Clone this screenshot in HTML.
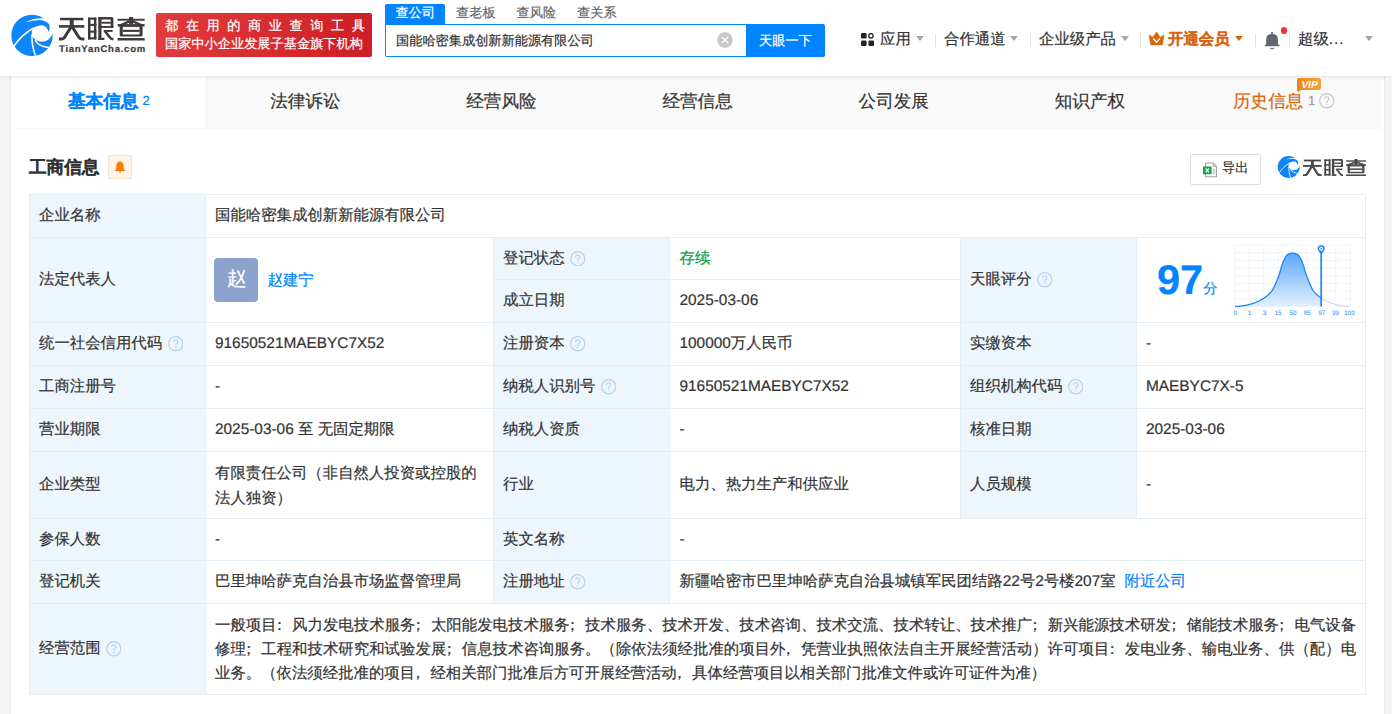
<!DOCTYPE html>
<html><head><meta charset="utf-8"><style>
html,body{margin:0;padding:0;width:1392px;height:714px;overflow:hidden;background:#f5f5f5}
body{font-family:"Liberation Sans",sans-serif;text-rendering:geometricPrecision;position:relative}
.a{position:absolute;box-sizing:border-box}
.t{position:absolute;white-space:nowrap;-webkit-text-stroke:0.2px currentColor}
.p{position:relative;left:-0.32em}
</style></head><body>
<div class="a" style="left:0px;top:0px;width:1392px;height:714px;background:#f5f5f5"></div>
<div class="a" style="left:10px;top:76px;width:1375px;height:638px;background:#ececec"></div>
<div class="a" style="left:11px;top:76px;width:1373px;height:638px;background:#fff"></div>
<div class="a" style="left:0px;top:0px;width:1392px;height:76px;background:#fff;box-shadow:0 1px 4px rgba(0,0,0,.08)"></div>
<svg class="a" style="left:10px;top:13px" width="45" height="45" viewBox="0 0 45 45"><circle cx="22" cy="22.4" r="20.7" fill="#0e85f8"/><path d="M3.6,33.8 Q11,22 23.6,15" fill="none" stroke="#fff" stroke-width="1.5"/>
<path d="M23.3,15.1 C26,13.2 30,12.2 33,12.4 C35.5,12.8 37.6,15 38.4,18.8 C40,16.5 40.2,12.5 38.5,10.6 C37,9 34.7,7.8 30,7.1 Q22,7.3 15.1,9.5 Q23,5 33.2,5.2 L36,3 L50,0 L50,21.1 L42.4,21.1 C41,24.5 38,28.3 32.8,28.6 C29.5,28.8 27,28 25.2,26.5 C23,25 21.6,22.5 21.7,20.8 C21.8,18.5 22.5,16.2 23.3,15.1Z" fill="#fff"/>
<path d="M21.9,22 Q21.6,33 25.8,43.5" fill="none" stroke="#fff" stroke-width="1.5"/>
<path d="M25,27.2 Q29,33.8 39.2,34.6" fill="none" stroke="#fff" stroke-width="1.5"/></svg>
<svg class="a" style="left:59.3px;top:17.2px;color:#3e3a39" width="85.7" height="23.5" viewBox="59.3 17.2 85.7 23.5" preserveAspectRatio="none" fill="currentColor"><rect x="60.4" y="18" width="23.3" height="2.5"/><rect x="59.3" y="25.3" width="25.4" height="2.6"/><rect x="70" y="19" width="4" height="8.5"/>
<path d="M71.3,27.3 L65.2,37 Q63.9,39.25 61.4,39.25 H59.3 M72.7,27.3 L78.8,37 Q80.1,39.25 82.6,39.25 H84.7" fill="none" stroke="currentColor" stroke-width="3"/>
<rect x="88.3" y="17.8" width="2.5" height="21.8"/><rect x="94.2" y="17.8" width="2.5" height="21.8"/><rect x="88.3" y="17.8" width="8.4" height="2.1"/><rect x="88.3" y="37.5" width="8.4" height="2.1"/><rect x="88.3" y="24.1" width="8.4" height="2.1"/><rect x="88.3" y="30.8" width="8.4" height="2.1"/>
<rect x="98.6" y="17.2" width="3.2" height="23"/><rect x="98.6" y="38" width="6.1" height="2.2"/><path d="M98.6,17.2 H112 Q113.7,17.2 113.7,18.9 V28.1 H111 V19.7 H98.6Z"/><rect x="101.8" y="22" width="9.4" height="1.9"/><rect x="98.6" y="26.2" width="15.1" height="1.9"/><rect x="104" y="30.2" width="8.9" height="1.9"/>
<path d="M105.2,31.3 L110.7,38.2 Q111.5,39.2 112.6,39.2 H113.7" fill="none" stroke="currentColor" stroke-width="2.5"/>
<rect x="117.9" y="19" width="27.1" height="1.9"/><rect x="129.4" y="17.2" width="4" height="7.5"/>
<path d="M129.8,21.6 L121.2,25.2 M133,21.6 L141.6,25.2" fill="none" stroke="currentColor" stroke-width="2.4"/>
<rect x="117.9" y="24.3" width="27.1" height="2.3"/><rect x="120" y="26.4" width="22.9" height="0.9"/>
<path d="M120,24.3 H123.1 V34.6 H139.8 V24.3 H142.9 V35.2 Q142.9,36.7 141.4,36.7 H121.5 Q120,36.7 120,35.2Z"/><rect x="123.1" y="30" width="16.7" height="2.1"/>
<rect x="117.9" y="38.2" width="27.1" height="2.5"/></svg>
<div class="t " style="left:59px;top:43.5px;font-size:9.5px;line-height:12px;color:#403a39;font-weight:bold;letter-spacing:0.75px">TianYanCha.com</div>
<div class="a" style="left:156px;top:13px;width:216px;height:44px;background:linear-gradient(100deg,#e23c3f,#cc1e24);border-radius:2px"></div>
<div class="t " style="left:165px;top:17.5px;font-size:13.2px;line-height:16px;color:#fff;font-weight:normal;letter-spacing:7.55px">都在用的商业查询工具</div>
<div class="t " style="left:165px;top:35.5px;font-size:13.2px;line-height:16px;color:#fff;font-weight:normal;letter-spacing:0px">国家中小企业发展子基金旗下机构</div>
<div class="a" style="left:385px;top:4px;width:60px;height:20px;background:#0084ff;border-radius:2px 2px 0 0"></div>
<div class="t " style="left:395.5px;top:5.0px;font-size:13.2px;line-height:16px;color:#fff;font-weight:normal;">查公司</div>
<div class="t " style="left:456px;top:5.0px;font-size:13.2px;line-height:16px;color:#666;font-weight:normal;">查老板</div>
<div class="t " style="left:516.5px;top:5.0px;font-size:13.2px;line-height:16px;color:#666;font-weight:normal;">查风险</div>
<div class="t " style="left:577px;top:5.0px;font-size:13.2px;line-height:16px;color:#666;font-weight:normal;">查关系</div>
<div class="a" style="left:385px;top:24px;width:362px;height:33px;border:1px solid #0084ff;box-sizing:border-box;border-radius:0 0 0 2px;background:#fff"></div>
<div class="t " style="left:396px;top:31.5px;font-size:13.2px;line-height:18px;color:#333;font-weight:normal;">国能哈密集成创新新能源有限公司</div>
<svg class="a" style="left:717px;top:32px" width="16" height="16" viewBox="0 0 16 16"><circle cx="8" cy="8" r="7.8" fill="#c8c8c8"/><path d="M5.2,5.2 L10.8,10.8 M10.8,5.2 L5.2,10.8" stroke="#fff" stroke-width="1.3"/></svg>
<div class="a" style="left:746px;top:24px;width:79px;height:33px;background:#0084ff;border-radius:0 2px 2px 0"></div>
<div class="t " style="left:759px;top:31.5px;font-size:13.2px;line-height:18px;color:#fff;font-weight:normal;">天眼一下</div>
<svg class="a" style="left:861px;top:33px" width="13" height="13" viewBox="0 0 13 13">
<rect x="0" y="0" width="5.6" height="5.6" rx="1.3" fill="#222"/><circle cx="9.9" cy="2.8" r="2.2" fill="none" stroke="#222" stroke-width="1.3"/>
<rect x="0" y="7.4" width="5.6" height="5.6" rx="1.3" fill="#222"/><rect x="7.4" y="7.4" width="5.6" height="5.6" rx="1.3" fill="#222"/></svg>
<div class="t " style="left:880px;top:29.5px;font-size:15.4px;line-height:20px;color:#333;font-weight:normal;">应用</div>
<svg class="a" style="left:916px;top:36px" width="8" height="5" viewBox="0 0 8 5"><path d="M0,0 L8,0 L4,5Z" fill="#a6a6a6"/></svg>
<div class="a" style="left:935px;top:34px;width:1px;height:12.5px;background:#dde1e6"></div>
<div class="t " style="left:944px;top:29.5px;font-size:15.4px;line-height:20px;color:#333;font-weight:normal;">合作通道</div>
<svg class="a" style="left:1010px;top:36px" width="8" height="5" viewBox="0 0 8 5"><path d="M0,0 L8,0 L4,5Z" fill="#a6a6a6"/></svg>
<div class="a" style="left:1030px;top:34px;width:1px;height:12.5px;background:#dde1e6"></div>
<div class="t " style="left:1039px;top:29.5px;font-size:15.4px;line-height:20px;color:#333;font-weight:normal;">企业级产品</div>
<svg class="a" style="left:1120.5px;top:36px" width="8" height="5" viewBox="0 0 8 5"><path d="M0,0 L8,0 L4,5Z" fill="#a6a6a6"/></svg>
<div class="a" style="left:1140px;top:34px;width:1px;height:12.5px;background:#dde1e6"></div>
<svg class="a" style="left:1145px;top:28px" width="24" height="22" viewBox="0 0 24 22"><path d="M4,7 L7.8,9.2 L11.5,4 L15.2,9.2 L19,7 L17.3,16.9 L5.7,16.9Z" fill="#d9660f" stroke="#d9660f" stroke-width=".6" stroke-linejoin="round"/><path d="M8.3,10.6 L11.6,14.2 L14.9,10.6" stroke="#fff" stroke-width="1.5" fill="none"/></svg>
<div class="t " style="left:1168px;top:29.5px;font-size:15.4px;line-height:20px;color:#d9660f;font-weight:bold;">开通会员</div>
<svg class="a" style="left:1235px;top:36px" width="8" height="5" viewBox="0 0 8 5"><path d="M0,0 L8,0 L4,5Z" fill="#d9660f"/></svg>
<div class="a" style="left:1254.5px;top:34px;width:1px;height:12.5px;background:#dde1e6"></div>
<svg class="a" style="left:1264px;top:31px" width="17" height="19" viewBox="0 0 17 19"><rect x="7.2" y="1" width="1.7" height="3" fill="#5f6670"/><path d="M2.2,14 V8.4 Q2.2,3.1 8.05,3.1 Q13.9,3.1 13.9,8.4 V14Z" fill="#5f6670"/><rect x="0.9" y="13.6" width="14.7" height="1.6" rx=".8" fill="#5f6670"/><rect x="6.2" y="16.9" width="4" height="1" fill="#5f6670"/></svg>
<div class="a" style="left:1280.8px;top:27.1px;width:6.4px;height:6.6px;background:#fb2f2f;border-radius:50%"></div>
<div class="a" style="left:1289px;top:34px;width:1px;height:12.5px;background:#dde1e6"></div>
<div class="t " style="left:1298px;top:29.5px;font-size:15.4px;line-height:20px;color:#333;font-weight:normal;">超级<span style="letter-spacing:0.9px">...</span></div>
<svg class="a" style="left:1365px;top:36px" width="8" height="5" viewBox="0 0 8 5"><path d="M0,0 L8,0 L4,5Z" fill="#a6a6a6"/></svg>
<div class="a" style="left:11px;top:76px;width:1371px;height:53px;background:#f9f9f9"></div>
<div class="a" style="left:11px;top:76px;width:195px;height:52px;background:#fff"></div>
<div class="a" style="left:206px;top:76px;width:1px;height:53px;background:#f0f0f0"></div>
<div class="a" style="left:10px;top:76px;width:1375px;height:5px;background:linear-gradient(rgba(0,0,0,.075),rgba(0,0,0,.02) 50%,rgba(0,0,0,0))"></div>
<div class="a" style="left:11px;top:128px;width:195px;height:1px;background:#f9f9f9"></div>
<div class="t " style="left:68px;top:89.0px;font-size:17.6px;line-height:24px;color:#0084ff;font-weight:bold;">基本信息</div>
<div class="t " style="left:142.5px;top:89.0px;font-size:13.2px;line-height:24px;color:#0084ff;font-weight:normal;">2</div>
<div class="t " style="left:270.14px;top:89.0px;font-size:17.6px;line-height:24px;color:#333;font-weight:normal;">法律诉讼</div>
<div class="t " style="left:466.28px;top:89.0px;font-size:17.6px;line-height:24px;color:#333;font-weight:normal;">经营风险</div>
<div class="t " style="left:662.42px;top:89.0px;font-size:17.6px;line-height:24px;color:#333;font-weight:normal;">经营信息</div>
<div class="t " style="left:858.56px;top:89.0px;font-size:17.6px;line-height:24px;color:#333;font-weight:normal;">公司发展</div>
<div class="t " style="left:1054.6999999999998px;top:89.0px;font-size:17.6px;line-height:24px;color:#333;font-weight:normal;">知识产权</div>
<div class="t " style="left:1233px;top:89.0px;font-size:17.6px;line-height:24px;color:#d9660f;font-weight:normal;">历史信息</div>
<div class="t " style="left:1308px;top:89.0px;font-size:13.2px;line-height:24px;color:#999;font-weight:normal;">1</div>
<svg class="a" style="left:1319px;top:93px" width="15.5" height="15.5" viewBox="0 0 16 16"><circle cx="8" cy="8" r="7.3" fill="none" stroke="#c3c9d0" stroke-width="1.2"/><path d="M5.9,6.2 Q5.9,3.9 8,3.9 Q10.1,3.9 10.1,5.9 Q10.1,7.2 8.8,7.9 Q8,8.4 8,9.6 L8,10.2" fill="none" stroke="#c3c9d0" stroke-width="1.15"/><circle cx="8" cy="12" r=".75" fill="#c3c9d0"/></svg>
<svg class="a" style="left:1297px;top:78px" width="24" height="15" viewBox="0 0 24 15"><defs><linearGradient id="vg" x1="0" x2="1"><stop offset="0" stop-color="#f08519"/><stop offset="1" stop-color="#f6a33a"/></linearGradient></defs><path d="M2,0 L22,0 Q24,0 24,2 L24,10 Q24,12 22,12 L4,12 L1,14.5 L0,12 L0,2 Q0,0 2,0Z" fill="url(#vg)"/><text x="12.5" y="9.6" font-family="Liberation Sans" font-size="10" font-weight="bold" font-style="italic" fill="#fff" text-anchor="middle">VIP</text></svg>
<div class="t " style="left:29px;top:154.5px;font-size:17.6px;line-height:24px;color:#333;font-weight:bold;">工商信息</div>
<div class="a" style="left:108px;top:155px;width:24px;height:24px;background:#fff4e9;border:1px solid #ffe3c8;box-sizing:border-box;border-radius:2px"></div>
<svg class="a" style="left:114px;top:161px" width="12" height="12" viewBox="0 0 12 12"><path d="M6,0.5 Q9.6,0.8 9.7,5 L9.9,8.6 L11.4,10 L0.6,10 L2.1,8.6 L2.3,5 Q2.4,0.8 6,0.5Z" fill="#ff7a00"/><path d="M4.3,10.6 Q6,12.6 7.7,10.6Z" fill="#ff7a00"/></svg>
<div class="a" style="left:1190px;top:154px;width:71px;height:31px;border:1px solid #dcdcdc;box-sizing:border-box;border-radius:2px;background:#fff"></div>
<svg class="a" style="left:1203px;top:161.5px" width="16" height="16" viewBox="0 0 16 16"><path d="M2.6,1 H10.2 L13.4,4.4 V14.7 H2.6Z" fill="#fff" stroke="#9ea3a8" stroke-width="1.1"/><path d="M10.2,1.2 V4.4 H13.2" fill="none" stroke="#9ea3a8" stroke-width="0.9"/><rect x="0" y="4.4" width="8.6" height="7.9" rx=".3" fill="#18a14a"/><path d="M2.7,6.4 L5.9,10.4 M5.9,6.4 L2.7,10.4" stroke="#fff" stroke-width="1.25"/><rect x="9.6" y="6.6" width="2.3" height="4.4" fill="#cdd0d4"/><rect x="9.6" y="11.3" width="2.3" height="0.9" fill="#b0b4b9"/></svg>
<div class="t " style="left:1222px;top:158.5px;font-size:13.2px;line-height:18px;color:#333;font-weight:normal;">导出</div>
<svg class="a" style="left:1277.3px;top:155px" width="24" height="24" viewBox="0 0 45 45"><circle cx="22" cy="22.4" r="20.7" fill="#0e85f8"/><path d="M3.6,33.8 Q11,22 23.6,15" fill="none" stroke="#fff" stroke-width="1.5"/>
<path d="M23.3,15.1 C26,13.2 30,12.2 33,12.4 C35.5,12.8 37.6,15 38.4,18.8 C40,16.5 40.2,12.5 38.5,10.6 C37,9 34.7,7.8 30,7.1 Q22,7.3 15.1,9.5 Q23,5 33.2,5.2 L36,3 L50,0 L50,21.1 L42.4,21.1 C41,24.5 38,28.3 32.8,28.6 C29.5,28.8 27,28 25.2,26.5 C23,25 21.6,22.5 21.7,20.8 C21.8,18.5 22.5,16.2 23.3,15.1Z" fill="#fff"/>
<path d="M21.9,22 Q21.6,33 25.8,43.5" fill="none" stroke="#fff" stroke-width="1.5"/>
<path d="M25,27.2 Q29,33.8 39.2,34.6" fill="none" stroke="#fff" stroke-width="1.5"/></svg>
<svg class="a" style="left:1303px;top:158.6px;color:#4a4848" width="63" height="17.3" viewBox="59.3 17.2 85.7 23.5" preserveAspectRatio="none" fill="currentColor"><rect x="60.4" y="18" width="23.3" height="2.5"/><rect x="59.3" y="25.3" width="25.4" height="2.6"/><rect x="70" y="19" width="4" height="8.5"/>
<path d="M71.3,27.3 L65.2,37 Q63.9,39.25 61.4,39.25 H59.3 M72.7,27.3 L78.8,37 Q80.1,39.25 82.6,39.25 H84.7" fill="none" stroke="currentColor" stroke-width="3"/>
<rect x="88.3" y="17.8" width="2.5" height="21.8"/><rect x="94.2" y="17.8" width="2.5" height="21.8"/><rect x="88.3" y="17.8" width="8.4" height="2.1"/><rect x="88.3" y="37.5" width="8.4" height="2.1"/><rect x="88.3" y="24.1" width="8.4" height="2.1"/><rect x="88.3" y="30.8" width="8.4" height="2.1"/>
<rect x="98.6" y="17.2" width="3.2" height="23"/><rect x="98.6" y="38" width="6.1" height="2.2"/><path d="M98.6,17.2 H112 Q113.7,17.2 113.7,18.9 V28.1 H111 V19.7 H98.6Z"/><rect x="101.8" y="22" width="9.4" height="1.9"/><rect x="98.6" y="26.2" width="15.1" height="1.9"/><rect x="104" y="30.2" width="8.9" height="1.9"/>
<path d="M105.2,31.3 L110.7,38.2 Q111.5,39.2 112.6,39.2 H113.7" fill="none" stroke="currentColor" stroke-width="2.5"/>
<rect x="117.9" y="19" width="27.1" height="1.9"/><rect x="129.4" y="17.2" width="4" height="7.5"/>
<path d="M129.8,21.6 L121.2,25.2 M133,21.6 L141.6,25.2" fill="none" stroke="currentColor" stroke-width="2.4"/>
<rect x="117.9" y="24.3" width="27.1" height="2.3"/><rect x="120" y="26.4" width="22.9" height="0.9"/>
<path d="M120,24.3 H123.1 V34.6 H139.8 V24.3 H142.9 V35.2 Q142.9,36.7 141.4,36.7 H121.5 Q120,36.7 120,35.2Z"/><rect x="123.1" y="30" width="16.7" height="2.1"/>
<rect x="117.9" y="38.2" width="27.1" height="2.5"/></svg>
<div class="a" style="left:29px;top:194px;width:1336px;height:500px;background:#fff"></div>
<div class="a" style="left:29px;top:194px;width:176px;height:43px;background:#eef6fd"></div>
<div class="a" style="left:29px;top:237px;width:176px;height:85px;background:#eef6fd"></div>
<div class="a" style="left:29px;top:322px;width:176px;height:43px;background:#eef6fd"></div>
<div class="a" style="left:29px;top:365px;width:176px;height:43px;background:#eef6fd"></div>
<div class="a" style="left:29px;top:408px;width:176px;height:43px;background:#eef6fd"></div>
<div class="a" style="left:29px;top:451px;width:176px;height:67px;background:#eef6fd"></div>
<div class="a" style="left:29px;top:518px;width:176px;height:42px;background:#eef6fd"></div>
<div class="a" style="left:29px;top:560px;width:176px;height:43px;background:#eef6fd"></div>
<div class="a" style="left:29px;top:603px;width:176px;height:91px;background:#eef6fd"></div>
<div class="a" style="left:493px;top:237px;width:176px;height:85px;background:#eef6fd"></div>
<div class="a" style="left:493px;top:322px;width:176px;height:43px;background:#eef6fd"></div>
<div class="a" style="left:493px;top:365px;width:176px;height:43px;background:#eef6fd"></div>
<div class="a" style="left:493px;top:408px;width:176px;height:43px;background:#eef6fd"></div>
<div class="a" style="left:493px;top:451px;width:176px;height:67px;background:#eef6fd"></div>
<div class="a" style="left:493px;top:518px;width:176px;height:42px;background:#eef6fd"></div>
<div class="a" style="left:493px;top:560px;width:176px;height:43px;background:#eef6fd"></div>
<div class="a" style="left:960px;top:237px;width:176px;height:85px;background:#eef6fd"></div>
<div class="a" style="left:960px;top:322px;width:176px;height:43px;background:#eef6fd"></div>
<div class="a" style="left:960px;top:365px;width:176px;height:43px;background:#eef6fd"></div>
<div class="a" style="left:960px;top:408px;width:176px;height:43px;background:#eef6fd"></div>
<div class="a" style="left:960px;top:451px;width:176px;height:67px;background:#eef6fd"></div>
<div class="a" style="left:29px;top:194px;width:1337px;height:1px;background:#e3edf6"></div>
<div class="a" style="left:29px;top:237px;width:1337px;height:1px;background:#e3edf6"></div>
<div class="a" style="left:29px;top:322px;width:1337px;height:1px;background:#e3edf6"></div>
<div class="a" style="left:29px;top:365px;width:1337px;height:1px;background:#e3edf6"></div>
<div class="a" style="left:29px;top:408px;width:1337px;height:1px;background:#e3edf6"></div>
<div class="a" style="left:29px;top:451px;width:1337px;height:1px;background:#e3edf6"></div>
<div class="a" style="left:29px;top:518px;width:1337px;height:1px;background:#e3edf6"></div>
<div class="a" style="left:29px;top:560px;width:1337px;height:1px;background:#e3edf6"></div>
<div class="a" style="left:29px;top:603px;width:1337px;height:1px;background:#e3edf6"></div>
<div class="a" style="left:29px;top:694px;width:1337px;height:1px;background:#e3edf6"></div>
<div class="a" style="left:493px;top:279px;width:468px;height:1px;background:#e3edf6"></div>
<div class="a" style="left:29px;top:194px;width:1px;height:501px;background:#e3edf6"></div>
<div class="a" style="left:1365px;top:194px;width:1px;height:501px;background:#e3edf6"></div>
<div class="a" style="left:205px;top:194px;width:1px;height:501px;background:#e3edf6"></div>
<div class="a" style="left:493px;top:237px;width:1px;height:367px;background:#e3edf6"></div>
<div class="a" style="left:669px;top:237px;width:1px;height:367px;background:#e3edf6"></div>
<div class="a" style="left:960px;top:237px;width:1px;height:282px;background:#e3edf6"></div>
<div class="a" style="left:1136px;top:237px;width:1px;height:282px;background:#e3edf6"></div>
<div class="t " style="left:39px;top:204.2px;font-size:15.4px;line-height:24px;color:#333;font-weight:normal;">企业名称</div>
<div class="t " style="left:215px;top:204.2px;font-size:15.4px;line-height:24px;color:#333;font-weight:normal;">国能哈密集成创新新能源有限公司</div>
<div class="t " style="left:39px;top:268.2px;font-size:15.4px;line-height:24px;color:#333;font-weight:normal;">法定代表人</div>
<div class="a" style="left:214px;top:258px;width:44px;height:44px;background:#8ba3cc;border-radius:4px"></div>
<div class="t " style="left:227px;top:266.09999999999997px;font-size:19.5px;line-height:26px;color:#fff;font-weight:normal;">赵</div>
<div class="t " style="left:267.5px;top:268.7px;font-size:15.4px;line-height:24px;color:#0084ff;font-weight:normal;">赵建宁</div>
<div class="t " style="left:503px;top:246.7px;font-size:15.4px;line-height:24px;color:#333;font-weight:normal;">登记状态</div>
<svg class="a" style="left:570.0px;top:250.6px" width="15.5" height="15.5" viewBox="0 0 16 16"><circle cx="8" cy="8" r="7.3" fill="none" stroke="#b6d2ee" stroke-width="1.2"/><path d="M5.9,6.2 Q5.9,3.9 8,3.9 Q10.1,3.9 10.1,5.9 Q10.1,7.2 8.8,7.9 Q8,8.4 8,9.6 L8,10.2" fill="none" stroke="#b6d2ee" stroke-width="1.15"/><circle cx="8" cy="12" r=".75" fill="#b6d2ee"/></svg>
<div class="t " style="left:679.5px;top:246.7px;font-size:15.4px;line-height:24px;color:#0b9b45;font-weight:normal;">存续</div>
<div class="t " style="left:503px;top:289.45px;font-size:15.4px;line-height:24px;color:#333;font-weight:normal;">成立日期</div>
<div class="t " style="left:679.5px;top:289.45px;font-size:15.4px;line-height:24px;color:#333;font-weight:normal;">2025-03-06</div>
<div class="t " style="left:970px;top:268.2px;font-size:15.4px;line-height:24px;color:#333;font-weight:normal;">天眼评分</div>
<svg class="a" style="left:1036.5px;top:272.1px" width="15.5" height="15.5" viewBox="0 0 16 16"><circle cx="8" cy="8" r="7.3" fill="none" stroke="#b6d2ee" stroke-width="1.2"/><path d="M5.9,6.2 Q5.9,3.9 8,3.9 Q10.1,3.9 10.1,5.9 Q10.1,7.2 8.8,7.9 Q8,8.4 8,9.6 L8,10.2" fill="none" stroke="#b6d2ee" stroke-width="1.15"/><circle cx="8" cy="12" r=".75" fill="#b6d2ee"/></svg>
<div class="t " style="left:1157px;top:258.0px;font-size:41.5px;line-height:44px;color:#0084ff;font-weight:bold;">97</div>
<div class="t " style="left:1203.5px;top:277.5px;font-size:14px;line-height:20px;color:#0084ff;font-weight:normal;">分</div>
<svg class="a" style="left:1235.2px;top:245.2px;overflow:visible" width="115.29999999999995" height="61.5" viewBox="0 0 115.29999999999995 61.5">
<defs><linearGradient id="cg" x1="0" y1="0" x2="0" y2="1"><stop offset="0" stop-color="#5aa8fd"/><stop offset="1" stop-color="#e4effc"/></linearGradient></defs>
<line x1="0.00" y1="0" x2="0.00" y2="61.5" stroke="#eef4fb" stroke-width="1"/><line x1="14.41" y1="0" x2="14.41" y2="61.5" stroke="#eef4fb" stroke-width="1"/><line x1="28.82" y1="0" x2="28.82" y2="61.5" stroke="#eef4fb" stroke-width="1"/><line x1="43.24" y1="0" x2="43.24" y2="61.5" stroke="#eef4fb" stroke-width="1"/><line x1="57.65" y1="0" x2="57.65" y2="61.5" stroke="#eef4fb" stroke-width="1"/><line x1="72.06" y1="0" x2="72.06" y2="61.5" stroke="#eef4fb" stroke-width="1"/><line x1="86.47" y1="0" x2="86.47" y2="61.5" stroke="#eef4fb" stroke-width="1"/><line x1="100.89" y1="0" x2="100.89" y2="61.5" stroke="#eef4fb" stroke-width="1"/><line x1="115.30" y1="0" x2="115.30" y2="61.5" stroke="#eef4fb" stroke-width="1"/><line x1="0" y1="0.00" x2="115.29999999999995" y2="0.00" stroke="#eef4fb" stroke-width="1"/><line x1="0" y1="7.69" x2="115.29999999999995" y2="7.69" stroke="#eef4fb" stroke-width="1"/><line x1="0" y1="15.38" x2="115.29999999999995" y2="15.38" stroke="#eef4fb" stroke-width="1"/><line x1="0" y1="23.06" x2="115.29999999999995" y2="23.06" stroke="#eef4fb" stroke-width="1"/><line x1="0" y1="30.75" x2="115.29999999999995" y2="30.75" stroke="#eef4fb" stroke-width="1"/><line x1="0" y1="38.44" x2="115.29999999999995" y2="38.44" stroke="#eef4fb" stroke-width="1"/><line x1="0" y1="46.12" x2="115.29999999999995" y2="46.12" stroke="#eef4fb" stroke-width="1"/><line x1="0" y1="53.81" x2="115.29999999999995" y2="53.81" stroke="#eef4fb" stroke-width="1"/><line x1="0" y1="61.50" x2="115.29999999999995" y2="61.50" stroke="#eef4fb" stroke-width="1"/>
<path d="M0.00,61.50 L0.25,61.49 L0.50,61.48 L0.75,61.47 L1.00,61.46 L1.25,61.45 L1.50,61.43 L1.75,61.42 L2.01,61.40 L2.26,61.38 L2.51,61.37 L2.76,61.35 L3.01,61.33 L3.26,61.30 L3.51,61.28 L3.76,61.26 L4.01,61.23 L4.26,61.21 L4.51,61.18 L4.76,61.16 L5.01,61.13 L5.26,61.10 L5.51,61.08 L5.76,61.05 L6.02,61.02 L6.27,60.99 L6.52,60.96 L6.77,60.93 L7.02,60.90 L7.27,60.86 L7.52,60.83 L7.77,60.80 L8.02,60.77 L8.27,60.74 L8.52,60.70 L8.77,60.66 L9.02,60.63 L9.27,60.59 L9.52,60.54 L9.78,60.50 L10.03,60.46 L10.28,60.41 L10.53,60.36 L10.78,60.31 L11.03,60.26 L11.28,60.21 L11.53,60.16 L11.78,60.10 L12.03,60.04 L12.28,59.99 L12.53,59.93 L12.78,59.87 L13.03,59.81 L13.28,59.75 L13.54,59.69 L13.79,59.63 L14.04,59.56 L14.29,59.50 L14.54,59.43 L14.79,59.37 L15.04,59.30 L15.29,59.24 L15.54,59.17 L15.79,59.10 L16.04,59.03 L16.29,58.95 L16.54,58.88 L16.79,58.80 L17.04,58.72 L17.29,58.64 L17.55,58.56 L17.80,58.47 L18.05,58.39 L18.30,58.30 L18.55,58.21 L18.80,58.12 L19.05,58.03 L19.30,57.93 L19.55,57.84 L19.80,57.74 L20.05,57.65 L20.30,57.55 L20.55,57.45 L20.80,57.35 L21.05,57.24 L21.31,57.14 L21.56,57.04 L21.81,56.93 L22.06,56.82 L22.31,56.71 L22.56,56.60 L22.81,56.49 L23.06,56.38 L23.31,56.26 L23.56,56.14 L23.81,56.02 L24.06,55.90 L24.31,55.78 L24.56,55.65 L24.81,55.52 L25.07,55.39 L25.32,55.26 L25.57,55.12 L25.82,54.99 L26.07,54.85 L26.32,54.71 L26.57,54.56 L26.82,54.42 L27.07,54.27 L27.32,54.12 L27.57,53.97 L27.82,53.81 L28.07,53.66 L28.32,53.49 L28.57,53.33 L28.82,53.17 L29.08,53.00 L29.33,52.83 L29.58,52.66 L29.83,52.49 L30.08,52.31 L30.33,52.13 L30.58,51.96 L30.83,51.77 L31.08,51.59 L31.33,51.40 L31.58,51.21 L31.83,51.01 L32.08,50.81 L32.33,50.61 L32.58,50.40 L32.84,50.19 L33.09,49.97 L33.34,49.74 L33.59,49.51 L33.84,49.28 L34.09,49.04 L34.34,48.79 L34.59,48.53 L34.84,48.27 L35.09,48.00 L35.34,47.73 L35.59,47.44 L35.84,47.15 L36.09,46.85 L36.34,46.55 L36.60,46.23 L36.85,45.88 L37.10,45.52 L37.35,45.14 L37.60,44.73 L37.85,44.31 L38.10,43.86 L38.35,43.40 L38.60,42.93 L38.85,42.43 L39.10,41.92 L39.35,41.40 L39.60,40.87 L39.85,40.32 L40.10,39.76 L40.35,39.19 L40.61,38.61 L40.86,38.02 L41.11,37.42 L41.36,36.82 L41.61,36.21 L41.86,35.59 L42.11,34.97 L42.36,34.35 L42.61,33.72 L42.86,33.09 L43.11,32.46 L43.36,31.83 L43.61,31.18 L43.86,30.47 L44.11,29.73 L44.37,28.95 L44.62,28.14 L44.87,27.31 L45.12,26.46 L45.37,25.60 L45.62,24.73 L45.87,23.86 L46.12,22.99 L46.37,22.13 L46.62,21.29 L46.87,20.46 L47.12,19.67 L47.37,18.90 L47.62,18.17 L47.87,17.49 L48.13,16.85 L48.38,16.27 L48.63,15.74 L48.88,15.26 L49.13,14.77 L49.38,14.29 L49.63,13.82 L49.88,13.35 L50.13,12.90 L50.38,12.46 L50.63,12.03 L50.88,11.63 L51.13,11.24 L51.38,10.88 L51.63,10.55 L51.88,10.24 L52.14,9.97 L52.39,9.73 L52.64,9.52 L52.89,9.36 L53.14,9.23 L53.39,9.13 L53.64,9.04 L53.89,8.94 L54.14,8.86 L54.39,8.77 L54.64,8.69 L54.89,8.61 L55.14,8.54 L55.39,8.48 L55.64,8.42 L55.90,8.37 L56.15,8.32 L56.40,8.28 L56.65,8.24 L56.90,8.22 L57.15,8.20 L57.40,8.18 L57.65,8.18 L57.90,8.18 L58.15,8.20 L58.40,8.22 L58.65,8.24 L58.90,8.28 L59.15,8.32 L59.40,8.37 L59.66,8.42 L59.91,8.48 L60.16,8.54 L60.41,8.61 L60.66,8.69 L60.91,8.77 L61.16,8.86 L61.41,8.94 L61.66,9.04 L61.91,9.13 L62.16,9.23 L62.41,9.36 L62.66,9.52 L62.91,9.73 L63.16,9.97 L63.41,10.24 L63.67,10.55 L63.92,10.88 L64.17,11.24 L64.42,11.63 L64.67,12.03 L64.92,12.46 L65.17,12.90 L65.42,13.35 L65.67,13.82 L65.92,14.29 L66.17,14.77 L66.42,15.26 L66.67,15.74 L66.92,16.27 L67.17,16.85 L67.43,17.49 L67.68,18.17 L67.93,18.90 L68.18,19.67 L68.43,20.46 L68.68,21.29 L68.93,22.13 L69.18,22.99 L69.43,23.86 L69.68,24.73 L69.93,25.60 L70.18,26.46 L70.43,27.31 L70.68,28.14 L70.93,28.95 L71.19,29.73 L71.44,30.47 L71.69,31.18 L71.94,31.83 L72.19,32.46 L72.44,33.09 L72.69,33.72 L72.94,34.35 L73.19,34.97 L73.44,35.59 L73.69,36.21 L73.94,36.82 L74.19,37.42 L74.44,38.02 L74.69,38.61 L74.94,39.19 L75.20,39.76 L75.45,40.32 L75.70,40.87 L75.95,41.40 L76.20,41.92 L76.45,42.43 L76.70,42.93 L76.95,43.40 L77.20,43.86 L77.45,44.31 L77.70,44.73 L77.95,45.14 L78.20,45.52 L78.45,45.88 L78.70,46.23 L78.96,46.55 L79.21,46.85 L79.46,47.15 L79.71,47.44 L79.96,47.73 L80.21,48.00 L80.46,48.27 L80.71,48.53 L80.96,48.79 L81.21,49.04 L81.46,49.28 L81.71,49.51 L81.96,49.74 L82.21,49.97 L82.46,50.19 L82.72,50.40 L82.97,50.61 L83.22,50.81 L83.47,51.01 L83.72,51.21 L83.97,51.40 L84.22,51.59 L84.47,51.77 L84.72,51.96 L84.97,52.13 L85.22,52.31 L85.47,52.49 L85.72,52.66 L85.97,52.83 L86.20,52.98 L86.20,61.5 L0,61.5Z" fill="url(#cg)"/>
<path d="M86.20,52.98 L86.22,53.00 L86.47,53.17 L86.73,53.33 L86.98,53.49 L87.23,53.66 L87.48,53.81 L87.73,53.97 L87.98,54.12 L88.23,54.27 L88.48,54.42 L88.73,54.56 L88.98,54.71 L89.23,54.85 L89.48,54.99 L89.73,55.12 L89.98,55.26 L90.23,55.39 L90.49,55.52 L90.74,55.65 L90.99,55.78 L91.24,55.90 L91.49,56.02 L91.74,56.14 L91.99,56.26 L92.24,56.38 L92.49,56.49 L92.74,56.60 L92.99,56.71 L93.24,56.82 L93.49,56.93 L93.74,57.04 L93.99,57.14 L94.25,57.24 L94.50,57.35 L94.75,57.45 L95.00,57.55 L95.25,57.65 L95.50,57.74 L95.75,57.84 L96.00,57.93 L96.25,58.03 L96.50,58.12 L96.75,58.21 L97.00,58.30 L97.25,58.39 L97.50,58.47 L97.75,58.56 L98.00,58.64 L98.26,58.72 L98.51,58.80 L98.76,58.88 L99.01,58.95 L99.26,59.03 L99.51,59.10 L99.76,59.17 L100.01,59.24 L100.26,59.30 L100.51,59.37 L100.76,59.43 L101.01,59.50 L101.26,59.56 L101.51,59.63 L101.76,59.69 L102.02,59.75 L102.27,59.81 L102.52,59.87 L102.77,59.93 L103.02,59.99 L103.27,60.04 L103.52,60.10 L103.77,60.16 L104.02,60.21 L104.27,60.26 L104.52,60.31 L104.77,60.36 L105.02,60.41 L105.27,60.46 L105.52,60.50 L105.78,60.54 L106.03,60.59 L106.28,60.63 L106.53,60.66 L106.78,60.70 L107.03,60.74 L107.28,60.77 L107.53,60.80 L107.78,60.83 L108.03,60.86 L108.28,60.90 L108.53,60.93 L108.78,60.96 L109.03,60.99 L109.28,61.02 L109.53,61.05 L109.79,61.08 L110.04,61.10 L110.29,61.13 L110.54,61.16 L110.79,61.18 L111.04,61.21 L111.29,61.23 L111.54,61.26 L111.79,61.28 L112.04,61.30 L112.29,61.33 L112.54,61.35 L112.79,61.37 L113.04,61.38 L113.29,61.40 L113.55,61.42 L113.80,61.43 L114.05,61.45 L114.30,61.46 L114.55,61.47 L114.80,61.48 L115.05,61.49 L115.30,61.50" fill="none" stroke="#cdd3da" stroke-width="1.1"/>
<path d="M0.00,61.50 L0.25,61.49 L0.50,61.48 L0.75,61.47 L1.00,61.46 L1.25,61.45 L1.50,61.43 L1.75,61.42 L2.01,61.40 L2.26,61.38 L2.51,61.37 L2.76,61.35 L3.01,61.33 L3.26,61.30 L3.51,61.28 L3.76,61.26 L4.01,61.23 L4.26,61.21 L4.51,61.18 L4.76,61.16 L5.01,61.13 L5.26,61.10 L5.51,61.08 L5.76,61.05 L6.02,61.02 L6.27,60.99 L6.52,60.96 L6.77,60.93 L7.02,60.90 L7.27,60.86 L7.52,60.83 L7.77,60.80 L8.02,60.77 L8.27,60.74 L8.52,60.70 L8.77,60.66 L9.02,60.63 L9.27,60.59 L9.52,60.54 L9.78,60.50 L10.03,60.46 L10.28,60.41 L10.53,60.36 L10.78,60.31 L11.03,60.26 L11.28,60.21 L11.53,60.16 L11.78,60.10 L12.03,60.04 L12.28,59.99 L12.53,59.93 L12.78,59.87 L13.03,59.81 L13.28,59.75 L13.54,59.69 L13.79,59.63 L14.04,59.56 L14.29,59.50 L14.54,59.43 L14.79,59.37 L15.04,59.30 L15.29,59.24 L15.54,59.17 L15.79,59.10 L16.04,59.03 L16.29,58.95 L16.54,58.88 L16.79,58.80 L17.04,58.72 L17.29,58.64 L17.55,58.56 L17.80,58.47 L18.05,58.39 L18.30,58.30 L18.55,58.21 L18.80,58.12 L19.05,58.03 L19.30,57.93 L19.55,57.84 L19.80,57.74 L20.05,57.65 L20.30,57.55 L20.55,57.45 L20.80,57.35 L21.05,57.24 L21.31,57.14 L21.56,57.04 L21.81,56.93 L22.06,56.82 L22.31,56.71 L22.56,56.60 L22.81,56.49 L23.06,56.38 L23.31,56.26 L23.56,56.14 L23.81,56.02 L24.06,55.90 L24.31,55.78 L24.56,55.65 L24.81,55.52 L25.07,55.39 L25.32,55.26 L25.57,55.12 L25.82,54.99 L26.07,54.85 L26.32,54.71 L26.57,54.56 L26.82,54.42 L27.07,54.27 L27.32,54.12 L27.57,53.97 L27.82,53.81 L28.07,53.66 L28.32,53.49 L28.57,53.33 L28.82,53.17 L29.08,53.00 L29.33,52.83 L29.58,52.66 L29.83,52.49 L30.08,52.31 L30.33,52.13 L30.58,51.96 L30.83,51.77 L31.08,51.59 L31.33,51.40 L31.58,51.21 L31.83,51.01 L32.08,50.81 L32.33,50.61 L32.58,50.40 L32.84,50.19 L33.09,49.97 L33.34,49.74 L33.59,49.51 L33.84,49.28 L34.09,49.04 L34.34,48.79 L34.59,48.53 L34.84,48.27 L35.09,48.00 L35.34,47.73 L35.59,47.44 L35.84,47.15 L36.09,46.85 L36.34,46.55 L36.60,46.23 L36.85,45.88 L37.10,45.52 L37.35,45.14 L37.60,44.73 L37.85,44.31 L38.10,43.86 L38.35,43.40 L38.60,42.93 L38.85,42.43 L39.10,41.92 L39.35,41.40 L39.60,40.87 L39.85,40.32 L40.10,39.76 L40.35,39.19 L40.61,38.61 L40.86,38.02 L41.11,37.42 L41.36,36.82 L41.61,36.21 L41.86,35.59 L42.11,34.97 L42.36,34.35 L42.61,33.72 L42.86,33.09 L43.11,32.46 L43.36,31.83 L43.61,31.18 L43.86,30.47 L44.11,29.73 L44.37,28.95 L44.62,28.14 L44.87,27.31 L45.12,26.46 L45.37,25.60 L45.62,24.73 L45.87,23.86 L46.12,22.99 L46.37,22.13 L46.62,21.29 L46.87,20.46 L47.12,19.67 L47.37,18.90 L47.62,18.17 L47.87,17.49 L48.13,16.85 L48.38,16.27 L48.63,15.74 L48.88,15.26 L49.13,14.77 L49.38,14.29 L49.63,13.82 L49.88,13.35 L50.13,12.90 L50.38,12.46 L50.63,12.03 L50.88,11.63 L51.13,11.24 L51.38,10.88 L51.63,10.55 L51.88,10.24 L52.14,9.97 L52.39,9.73 L52.64,9.52 L52.89,9.36 L53.14,9.23 L53.39,9.13 L53.64,9.04 L53.89,8.94 L54.14,8.86 L54.39,8.77 L54.64,8.69 L54.89,8.61 L55.14,8.54 L55.39,8.48 L55.64,8.42 L55.90,8.37 L56.15,8.32 L56.40,8.28 L56.65,8.24 L56.90,8.22 L57.15,8.20 L57.40,8.18 L57.65,8.18 L57.90,8.18 L58.15,8.20 L58.40,8.22 L58.65,8.24 L58.90,8.28 L59.15,8.32 L59.40,8.37 L59.66,8.42 L59.91,8.48 L60.16,8.54 L60.41,8.61 L60.66,8.69 L60.91,8.77 L61.16,8.86 L61.41,8.94 L61.66,9.04 L61.91,9.13 L62.16,9.23 L62.41,9.36 L62.66,9.52 L62.91,9.73 L63.16,9.97 L63.41,10.24 L63.67,10.55 L63.92,10.88 L64.17,11.24 L64.42,11.63 L64.67,12.03 L64.92,12.46 L65.17,12.90 L65.42,13.35 L65.67,13.82 L65.92,14.29 L66.17,14.77 L66.42,15.26 L66.67,15.74 L66.92,16.27 L67.17,16.85 L67.43,17.49 L67.68,18.17 L67.93,18.90 L68.18,19.67 L68.43,20.46 L68.68,21.29 L68.93,22.13 L69.18,22.99 L69.43,23.86 L69.68,24.73 L69.93,25.60 L70.18,26.46 L70.43,27.31 L70.68,28.14 L70.93,28.95 L71.19,29.73 L71.44,30.47 L71.69,31.18 L71.94,31.83 L72.19,32.46 L72.44,33.09 L72.69,33.72 L72.94,34.35 L73.19,34.97 L73.44,35.59 L73.69,36.21 L73.94,36.82 L74.19,37.42 L74.44,38.02 L74.69,38.61 L74.94,39.19 L75.20,39.76 L75.45,40.32 L75.70,40.87 L75.95,41.40 L76.20,41.92 L76.45,42.43 L76.70,42.93 L76.95,43.40 L77.20,43.86 L77.45,44.31 L77.70,44.73 L77.95,45.14 L78.20,45.52 L78.45,45.88 L78.70,46.23 L78.96,46.55 L79.21,46.85 L79.46,47.15 L79.71,47.44 L79.96,47.73 L80.21,48.00 L80.46,48.27 L80.71,48.53 L80.96,48.79 L81.21,49.04 L81.46,49.28 L81.71,49.51 L81.96,49.74 L82.21,49.97 L82.46,50.19 L82.72,50.40 L82.97,50.61 L83.22,50.81 L83.47,51.01 L83.72,51.21 L83.97,51.40 L84.22,51.59 L84.47,51.77 L84.72,51.96 L84.97,52.13 L85.22,52.31 L85.47,52.49 L85.72,52.66 L85.97,52.83 L86.20,52.98" fill="none" stroke="#1a86f5" stroke-width="1.3"/>
<line x1="86.20" y1="6" x2="86.20" y2="61.5" stroke="#1a86f5" stroke-width="1.7"/>
<path d="M82.60,3.8 A3.6,3.6 0 1 1 89.80,3.8 Q89.60,6.2 86.20,9.6 Q82.80,6.2 82.60,3.8Z" fill="#1a86f5"/>
<circle cx="86.20" cy="3.8" r="2.1" fill="#fff"/>
<circle cx="86.20" cy="3.8" r="0.9" fill="#1a86f5"/>
</svg>
<div class="t" style="left:1225.4px;top:308.8px;width:20px;text-align:center;font-size:6.4px;line-height:9px;color:#2f88ec;-webkit-text-stroke:0">0</div>
<div class="t" style="left:1239.6px;top:308.8px;width:20px;text-align:center;font-size:6.4px;line-height:9px;color:#2f88ec;-webkit-text-stroke:0">1</div>
<div class="t" style="left:1254.5px;top:308.8px;width:20px;text-align:center;font-size:6.4px;line-height:9px;color:#2f88ec;-webkit-text-stroke:0">3</div>
<div class="t" style="left:1268px;top:308.8px;width:20px;text-align:center;font-size:6.4px;line-height:9px;color:#2f88ec;-webkit-text-stroke:0">15</div>
<div class="t" style="left:1283px;top:308.8px;width:20px;text-align:center;font-size:6.4px;line-height:9px;color:#2f88ec;-webkit-text-stroke:0">50</div>
<div class="t" style="left:1297.3px;top:308.8px;width:20px;text-align:center;font-size:6.4px;line-height:9px;color:#2f88ec;-webkit-text-stroke:0">85</div>
<div class="t" style="left:1311.7px;top:308.8px;width:20px;text-align:center;font-size:6.4px;line-height:9px;color:#2f88ec;-webkit-text-stroke:0">97</div>
<div class="t" style="left:1325.6px;top:308.8px;width:20px;text-align:center;font-size:6.4px;line-height:9px;color:#2f88ec;-webkit-text-stroke:0">99</div>
<div class="t" style="left:1339.4px;top:308.8px;width:20px;text-align:center;font-size:6.4px;line-height:9px;color:#2f88ec;-webkit-text-stroke:0">100</div>
<div class="t " style="left:39px;top:332.2px;font-size:15.4px;line-height:24px;color:#333;font-weight:normal;">统一社会信用代码</div>
<svg class="a" style="left:167.5px;top:336.1px" width="15.5" height="15.5" viewBox="0 0 16 16"><circle cx="8" cy="8" r="7.3" fill="none" stroke="#b6d2ee" stroke-width="1.2"/><path d="M5.9,6.2 Q5.9,3.9 8,3.9 Q10.1,3.9 10.1,5.9 Q10.1,7.2 8.8,7.9 Q8,8.4 8,9.6 L8,10.2" fill="none" stroke="#b6d2ee" stroke-width="1.15"/><circle cx="8" cy="12" r=".75" fill="#b6d2ee"/></svg>
<div class="t " style="left:215px;top:332.2px;font-size:15.4px;line-height:24px;color:#333;font-weight:normal;">91650521MAEBYC7X52</div>
<div class="t " style="left:503px;top:332.2px;font-size:15.4px;line-height:24px;color:#333;font-weight:normal;">注册资本</div>
<svg class="a" style="left:570.0px;top:336.1px" width="15.5" height="15.5" viewBox="0 0 16 16"><circle cx="8" cy="8" r="7.3" fill="none" stroke="#b6d2ee" stroke-width="1.2"/><path d="M5.9,6.2 Q5.9,3.9 8,3.9 Q10.1,3.9 10.1,5.9 Q10.1,7.2 8.8,7.9 Q8,8.4 8,9.6 L8,10.2" fill="none" stroke="#b6d2ee" stroke-width="1.15"/><circle cx="8" cy="12" r=".75" fill="#b6d2ee"/></svg>
<div class="t " style="left:679.5px;top:332.2px;font-size:15.4px;line-height:24px;color:#333;font-weight:normal;">100000万人民币</div>
<div class="t " style="left:970px;top:332.2px;font-size:15.4px;line-height:24px;color:#333;font-weight:normal;">实缴资本</div>
<div class="t " style="left:1146px;top:332.2px;font-size:15.4px;line-height:24px;color:#333;font-weight:normal;">-</div>
<div class="t " style="left:39px;top:375.2px;font-size:15.4px;line-height:24px;color:#333;font-weight:normal;">工商注册号</div>
<div class="t " style="left:215px;top:375.2px;font-size:15.4px;line-height:24px;color:#333;font-weight:normal;">-</div>
<div class="t " style="left:503px;top:375.2px;font-size:15.4px;line-height:24px;color:#333;font-weight:normal;">纳税人识别号</div>
<svg class="a" style="left:600.5px;top:379.1px" width="15.5" height="15.5" viewBox="0 0 16 16"><circle cx="8" cy="8" r="7.3" fill="none" stroke="#b6d2ee" stroke-width="1.2"/><path d="M5.9,6.2 Q5.9,3.9 8,3.9 Q10.1,3.9 10.1,5.9 Q10.1,7.2 8.8,7.9 Q8,8.4 8,9.6 L8,10.2" fill="none" stroke="#b6d2ee" stroke-width="1.15"/><circle cx="8" cy="12" r=".75" fill="#b6d2ee"/></svg>
<div class="t " style="left:679.5px;top:375.2px;font-size:15.4px;line-height:24px;color:#333;font-weight:normal;">91650521MAEBYC7X52</div>
<div class="t " style="left:970px;top:375.2px;font-size:15.4px;line-height:24px;color:#333;font-weight:normal;">组织机构代码</div>
<svg class="a" style="left:1067.5px;top:379.1px" width="15.5" height="15.5" viewBox="0 0 16 16"><circle cx="8" cy="8" r="7.3" fill="none" stroke="#b6d2ee" stroke-width="1.2"/><path d="M5.9,6.2 Q5.9,3.9 8,3.9 Q10.1,3.9 10.1,5.9 Q10.1,7.2 8.8,7.9 Q8,8.4 8,9.6 L8,10.2" fill="none" stroke="#b6d2ee" stroke-width="1.15"/><circle cx="8" cy="12" r=".75" fill="#b6d2ee"/></svg>
<div class="t " style="left:1146px;top:375.2px;font-size:15.4px;line-height:24px;color:#333;font-weight:normal;">MAEBYC7X-5</div>
<div class="t " style="left:39px;top:418.2px;font-size:15.4px;line-height:24px;color:#333;font-weight:normal;">营业期限</div>
<div class="t " style="left:215px;top:418.2px;font-size:15.4px;line-height:24px;color:#333;font-weight:normal;">2025-03-06 至 无固定期限</div>
<div class="t " style="left:503px;top:418.2px;font-size:15.4px;line-height:24px;color:#333;font-weight:normal;">纳税人资质</div>
<div class="t " style="left:679.5px;top:418.2px;font-size:15.4px;line-height:24px;color:#333;font-weight:normal;">-</div>
<div class="t " style="left:970px;top:418.2px;font-size:15.4px;line-height:24px;color:#333;font-weight:normal;">核准日期</div>
<div class="t " style="left:1146px;top:418.2px;font-size:15.4px;line-height:24px;color:#333;font-weight:normal;">2025-03-06</div>
<div class="t " style="left:39px;top:473.2px;font-size:15.4px;line-height:24px;color:#333;font-weight:normal;">企业类型</div>
<div class="t" style="left:215px;top:460.8px;font-size:15.4px;line-height:25px;color:#333">有限责任公司（非自然人投资或控股的<br>法人独资）</div>
<div class="t " style="left:503px;top:473.2px;font-size:15.4px;line-height:24px;color:#333;font-weight:normal;">行业</div>
<div class="t " style="left:679.5px;top:473.2px;font-size:15.4px;line-height:24px;color:#333;font-weight:normal;">电力、热力生产和供应业</div>
<div class="t " style="left:970px;top:473.2px;font-size:15.4px;line-height:24px;color:#333;font-weight:normal;">人员规模</div>
<div class="t " style="left:1146px;top:473.2px;font-size:15.4px;line-height:24px;color:#333;font-weight:normal;">-</div>
<div class="t " style="left:39px;top:527.7px;font-size:15.4px;line-height:24px;color:#333;font-weight:normal;">参保人数</div>
<div class="t " style="left:215px;top:527.7px;font-size:15.4px;line-height:24px;color:#333;font-weight:normal;">-</div>
<div class="t " style="left:503px;top:527.7px;font-size:15.4px;line-height:24px;color:#333;font-weight:normal;">英文名称</div>
<div class="t " style="left:679.5px;top:527.7px;font-size:15.4px;line-height:24px;color:#333;font-weight:normal;">-</div>
<div class="t " style="left:39px;top:570.2px;font-size:15.4px;line-height:24px;color:#333;font-weight:normal;">登记机关</div>
<div class="t " style="left:215px;top:570.2px;font-size:15.4px;line-height:24px;color:#333;font-weight:normal;">巴里坤哈萨克自治县市场监督管理局</div>
<div class="t " style="left:503px;top:570.2px;font-size:15.4px;line-height:24px;color:#333;font-weight:normal;">注册地址</div>
<svg class="a" style="left:570.0px;top:574.1px" width="15.5" height="15.5" viewBox="0 0 16 16"><circle cx="8" cy="8" r="7.3" fill="none" stroke="#b6d2ee" stroke-width="1.2"/><path d="M5.9,6.2 Q5.9,3.9 8,3.9 Q10.1,3.9 10.1,5.9 Q10.1,7.2 8.8,7.9 Q8,8.4 8,9.6 L8,10.2" fill="none" stroke="#b6d2ee" stroke-width="1.15"/><circle cx="8" cy="12" r=".75" fill="#b6d2ee"/></svg>
<div class="t " style="left:679.5px;top:570.2px;font-size:15.4px;line-height:24px;color:#333;font-weight:normal;">新疆哈密市巴里坤哈萨克自治县城镇军民团结路22号2号楼207室</div>
<div class="t " style="left:1124.5px;top:570.2px;font-size:15.4px;line-height:24px;color:#0084ff;font-weight:normal;">附近公司</div>
<div class="t " style="left:39px;top:637.2px;font-size:15.4px;line-height:24px;color:#333;font-weight:normal;">经营范围</div>
<svg class="a" style="left:105.5px;top:641.1px" width="15.5" height="15.5" viewBox="0 0 16 16"><circle cx="8" cy="8" r="7.3" fill="none" stroke="#b6d2ee" stroke-width="1.2"/><path d="M5.9,6.2 Q5.9,3.9 8,3.9 Q10.1,3.9 10.1,5.9 Q10.1,7.2 8.8,7.9 Q8,8.4 8,9.6 L8,10.2" fill="none" stroke="#b6d2ee" stroke-width="1.15"/><circle cx="8" cy="12" r=".75" fill="#b6d2ee"/></svg>
<div class="t " style="left:215px;top:613.5px;font-size:15.4px;line-height:24px;color:#333;font-weight:normal;text-align:justify;text-align-last:justify;width:1141px;">一般项目<span class="p">：</span>风力发电技术服务<span class="p">；</span>太阳能发电技术服务<span class="p">；</span>技术服务、技术开发、技术咨询、技术交流、技术转让、技术推广<span class="p">；</span>新兴能源技术研发<span class="p">；</span>储能技术服务<span class="p">；</span>电气设备</div>
<div class="t " style="left:215px;top:637.7px;font-size:15.4px;line-height:24px;color:#333;font-weight:normal;text-align:justify;text-align-last:justify;width:1141px;">修理<span class="p">；</span>工程和技术研究和试验发展<span class="p">；</span>信息技术咨询服务。（除依法须经批准的项目外<span class="p">，</span>凭营业执照依法自主开展经营活动）许可项目<span class="p">：</span>发电业务、输电业务、供（配）电</div>
<div class="t " style="left:215px;top:661.9000000000001px;font-size:15.4px;line-height:24px;color:#333;font-weight:normal;">业务。（依法须经批准的项目<span class="p">，</span>经相关部门批准后方可开展经营活动<span class="p">，</span>具体经营项目以相关部门批准文件或许可证件为准）</div>
</body></html>
